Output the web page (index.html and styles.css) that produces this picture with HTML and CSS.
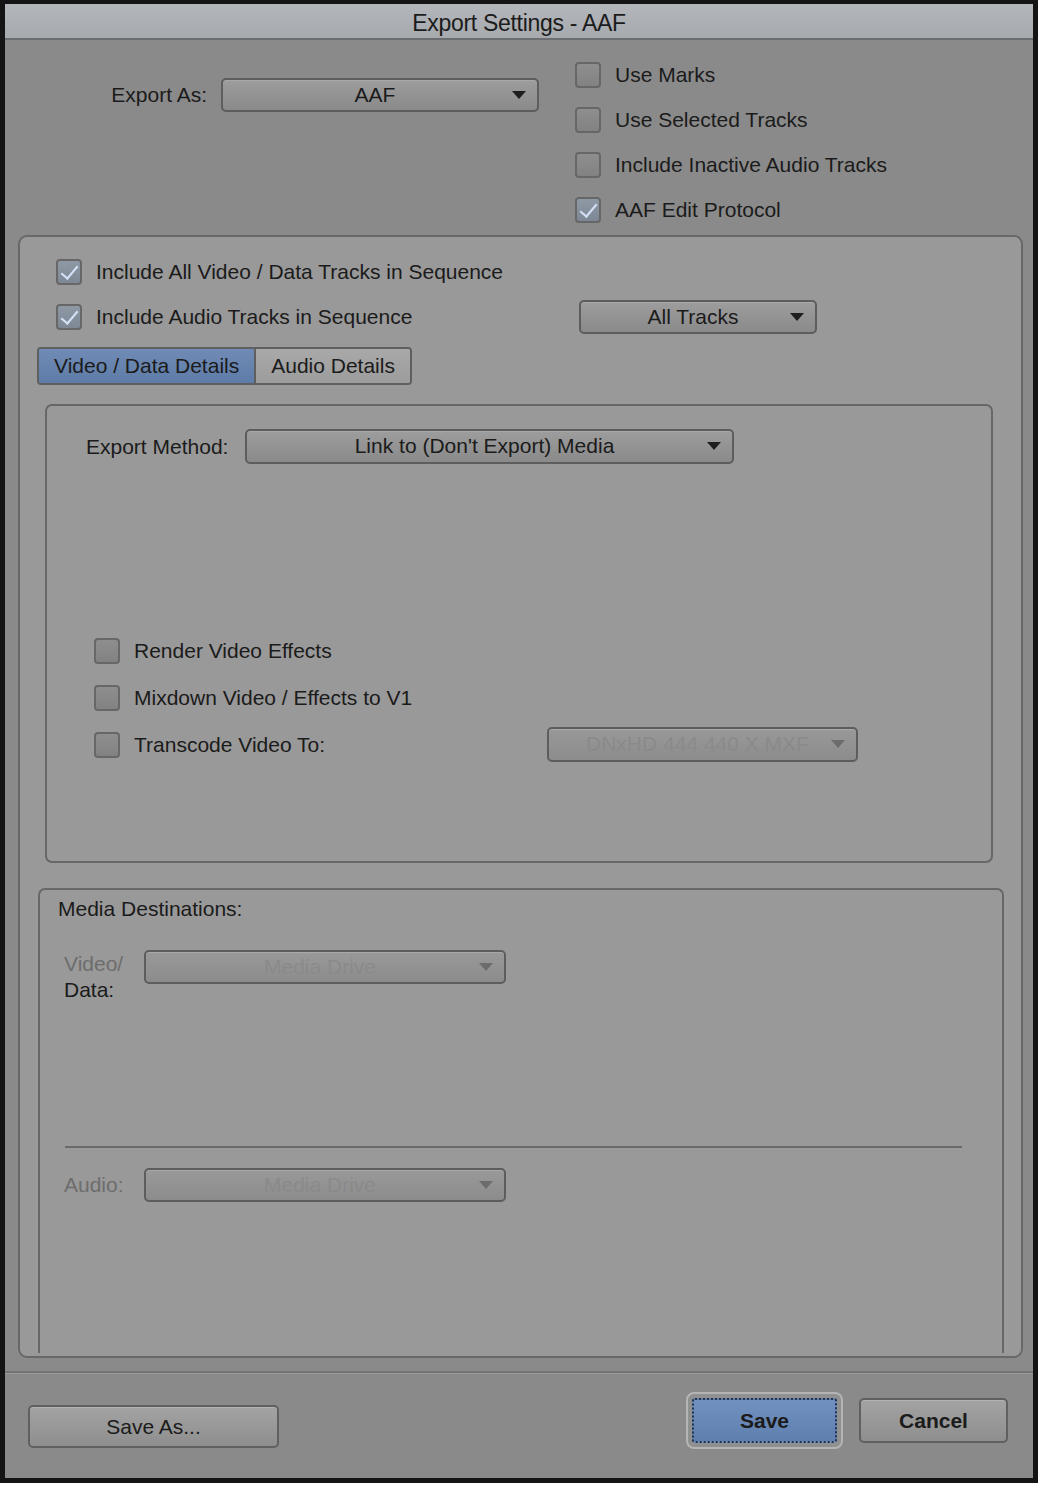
FILE: index.html
```html
<!DOCTYPE html>
<html lang="en">
<head>
    <link rel="stylesheet" href="styles.css">
    <title>Export Settings - AAF</title>
</head>
<body>
<div class="window">
    <div class="titlebar">Export Settings - AAF</div>

    <div class="top">
        <div class="export-as">
            <span class="export-label">Export As:</span>
            <div class="dropdown export-drop">AAF<span class="arrow"></span></div>
        </div>
        <div class="top-checks">
            <div class="check-row"><span class="box"></span><span class="label">Use Marks</span></div>
            <div class="check-row"><span class="box"></span><span class="label">Use Selected Tracks</span></div>
            <div class="check-row"><span class="box"></span><span class="label">Include Inactive Audio Tracks</span></div>
            <div class="check-row"><span class="box checked"></span><span class="label">AAF Edit Protocol</span></div>
        </div>
    </div>

    <div class="panel">
        <div class="seq-checks">
            <div class="check-row"><span class="box checked"></span><span class="label">Include All Video / Data Tracks in Sequence</span></div>
            <div class="check-row">
                <div class="check-group audio-group"><span class="box checked"></span><span class="label">Include Audio Tracks in Sequence</span></div>
                <div class="dropdown tracks-drop">All Tracks<span class="arrow"></span></div>
            </div>
        </div>

        <div class="tabs">
            <div class="tab active">Video / Data Details</div>
            <div class="tab">Audio Details</div>
        </div>

        <div class="details">
            <div class="method-row">
                <span class="method-label">Export Method:</span>
                <div class="dropdown method-drop">Link to (Don't Export) Media<span class="arrow"></span></div>
            </div>
            <div class="effect-checks">
                <div class="check-row tall"><span class="box"></span><span class="label">Render Video Effects</span></div>
                <div class="check-row tall"><span class="box"></span><span class="label">Mixdown Video / Effects to V1</span></div>
                <div class="check-row tall">
                    <div class="check-group transcode-group"><span class="box"></span><span class="label">Transcode Video To:</span></div>
                    <div class="dropdown disabled transcode-drop">DNxHD 444 440 X  MXF<span class="arrow"></span></div>
                </div>
            </div>
        </div>

        <div class="media">
            <div class="media-title">Media Destinations:</div>
            <div class="dest-row">
                <div class="dest-label"><span class="dim">Video/</span><br>Data:</div>
                <div class="dropdown disabled dest-drop">Media Drive<span class="arrow"></span></div>
            </div>
            <div class="separator"></div>
            <div class="dest-row audio-row">
                <div class="dest-label dim">Audio:</div>
                <div class="dropdown disabled dest-drop">Media Drive<span class="arrow"></span></div>
            </div>
        </div>
    </div>

    <div class="footer">
        <div class="button save-as">Save As...</div>
        <div class="right-buttons">
            <div class="focus-ring"><div class="button save">Save</div></div>
            <div class="button cancel">Cancel</div>
        </div>
    </div>
</div>
</body>
</html>
```

FILE: styles.css
```css
body {
    margin: 0;
    background-color: white;
    font-family: "Liberation Sans", Arial, sans-serif;
    font-size: 21px;
    color: #1b1b1b;
}

.window {
    width: 1028px;
    height: 1474px;
    border: 5px solid #141414;
    border-top-width: 4px;
    background-color: #8a8a8a;
}

.titlebar {
    height: 34px;
    line-height: 39px;
    text-align: center;
    font-size: 23px;
    letter-spacing: -0.3px;
    background: linear-gradient(#b3b6ba, #a6a9ad);
    border-bottom: 2px solid #6b6d70;
}

.top {
    display: flex;
    height: 183px;
    padding-top: 12px;
}

.export-as {
    width: 570px;
    display: flex;
    align-items: center;
    align-self: flex-start;
    margin-top: 26px;
}

.export-label {
    width: 202px;
    text-align: right;
    margin-right: 14px;
}

.check-row {
    display: flex;
    align-items: center;
    height: 45px;
}

.check-row.tall {
    height: 47px;
}

.check-group {
    display: flex;
    align-items: center;
}

.box {
    width: 22px;
    height: 22px;
    border: 2px solid #676767;
    border-radius: 4px;
    background: linear-gradient(#8e8e8e, #828282);
    margin-right: 14px;
    flex-shrink: 0;
    position: relative;
}

.box.checked {
    background: linear-gradient(#8f99a6, #7e8894);
}

.box.checked::after {
    content: "";
    position: absolute;
    left: 7px;
    top: 1px;
    width: 7px;
    height: 15px;
    border-right: 2px solid #d3e2f6;
    border-bottom: 2px solid #d3e2f6;
    transform: rotate(40deg);
}

/* dropdowns */
.dropdown {
    position: relative;
    box-sizing: border-box;
    height: 34px;
    line-height: 30px;
    text-align: center;
    border: 2px solid #5d5d5d;
    border-radius: 5px;
    background: linear-gradient(#9d9d9d, #8a8a8a);
    box-shadow: inset 0 1px 0 #a9a9a9;
    padding-right: 10px;
}

.dropdown .arrow {
    position: absolute;
    right: 11px;
    top: 11px;
    border-left: 7px solid transparent;
    border-right: 7px solid transparent;
    border-top: 8px solid #1e1e1e;
}

.dropdown.disabled {
    color: #8a8a8a;
    background: linear-gradient(#999999, #8c8c8c);
}

.dropdown.disabled .arrow {
    border-top-color: #6c6c6c;
}

.export-drop {
    width: 318px;
}

/* main panel */
.panel {
    box-sizing: border-box;
    height: 1123px;
    margin: 0 10px 0 13px;
    border: 2px solid #686868;
    border-radius: 9px;
    background-color: #999999;
    padding: 12px 0 0 0;
}

.seq-checks {
    padding-left: 36px;
}

.audio-group {
    width: 523px;
}

.tracks-drop {
    width: 238px;
}

.tabs {
    display: flex;
    width: fit-content;
    margin: 8px 0 0 17px;
    border: 2px solid #5f5f5f;
    border-radius: 4px;
    overflow: hidden;
}

.tab {
    height: 34px;
    line-height: 34px;
    padding: 0 15px;
    background: linear-gradient(#a9a9a9, #9c9c9c);
}

.tab.active {
    background: linear-gradient(#6f8bb5, #5e7ca8);
    border-right: 2px solid #5f5f5f;
}

.details {
    box-sizing: border-box;
    height: 459px;
    margin: 19px 28px 0 25px;
    border: 2px solid #676767;
    border-radius: 7px;
    padding-top: 23px;
}

.method-row {
    display: flex;
    align-items: center;
}

.method-label {
    box-sizing: border-box;
    width: 198px;
    padding-left: 39px;
}

.method-drop {
    width: 489px;
    height: 35px;
}

.effect-checks {
    margin-top: 163px;
    padding-left: 47px;
}

.transcode-group {
    width: 453px;
}

.transcode-drop {
    width: 311px;
    height: 35px;
}

.media {
    box-sizing: border-box;
    height: 465px;
    margin: 25px 17px 0 18px;
    border: 2px solid #676767;
    border-bottom: none;
    border-radius: 7px 7px 0 0;
}

.media-title {
    padding: 7px 0 0 18px;
    line-height: 24px;
}

.dest-row {
    display: flex;
    align-items: flex-start;
    margin-top: 29px;
}

.dest-label {
    box-sizing: border-box;
    width: 104px;
    padding: 0 0 0 24px;
    line-height: 26px;
    margin-top: 1px;
}

.dim {
    color: #6d6d6d;
}

.dest-drop {
    width: 362px;
}

.separator {
    height: 2px;
    margin: 143px 40px 0 25px;
    background-color: #6a6a6a;
}

.audio-row {
    margin-top: 20px;
}

.audio-row .dest-label {
    margin-top: 4px;
}

/* footer */
.footer {
    display: flex;
    justify-content: space-between;
    align-items: center;
    margin-top: 13px;
    border-top: 2px solid #737373;
    box-shadow: inset 0 1px 0 #9a9a9a;
    padding: 19px 25px 0 23px;
}

.right-buttons {
    display: flex;
    align-items: center;
    gap: 16px;
}

.button {
    box-sizing: border-box;
    text-align: center;
    border: 2px solid #606060;
    border-radius: 5px;
    background: linear-gradient(#a3a3a3, #8e8e8e);
    box-shadow: inset 0 1px 0 #b2b2b2;
}

.save-as {
    width: 251px;
    height: 43px;
    line-height: 39px;
    margin-top: 12px;
}

.focus-ring {
    padding: 4px;
    border: 2px solid #b4b4b4;
    border-radius: 8px;
    background-color: #909090;
}

.save {
    width: 145px;
    height: 45px;
    line-height: 41px;
    font-weight: bold;
    border: 2px dotted #23324d;
    border-radius: 3px;
    background: linear-gradient(#7191c0, #5f7fae);
    box-shadow: none;
}

.cancel {
    width: 149px;
    height: 45px;
    line-height: 41px;
    font-weight: bold;
}
```
